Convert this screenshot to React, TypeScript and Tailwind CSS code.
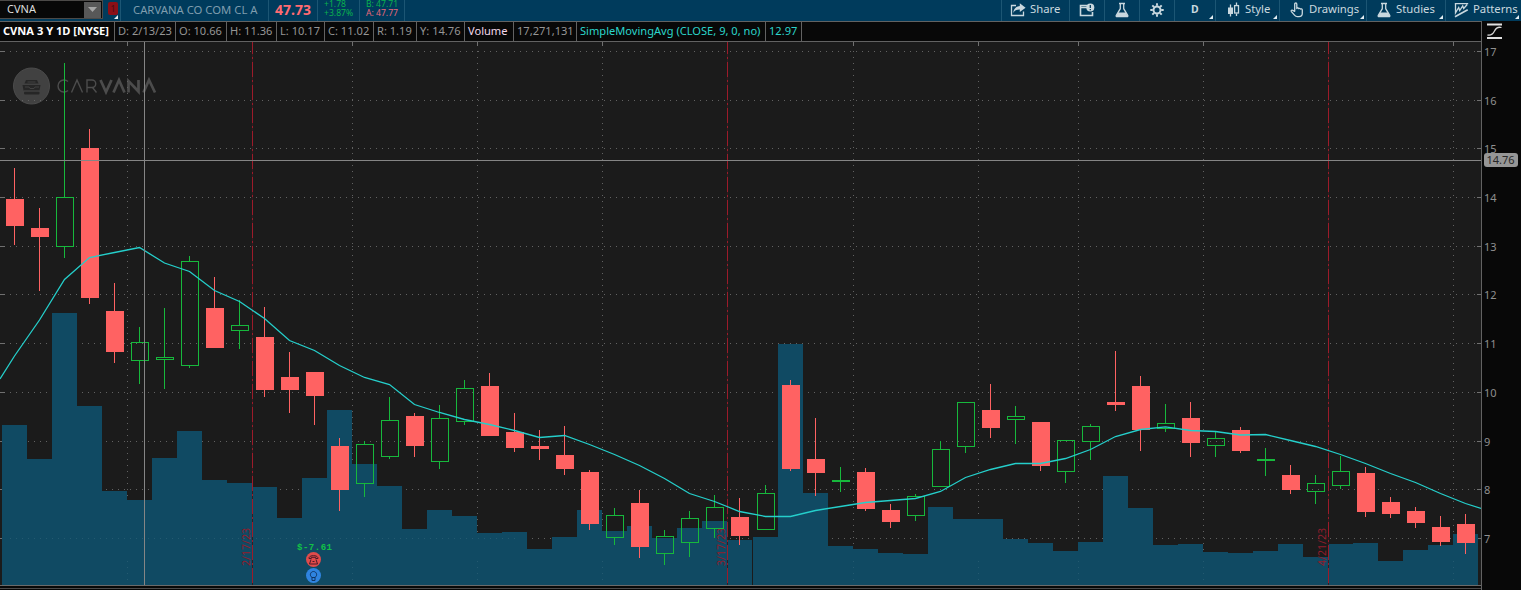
import type { ReactNode } from "react";
import clsx from "clsx";

type Candle = {
  up: boolean;
  high: number;
  top: number;
  bottom: number;
  low: number;
  volume: number;
};

const BASELINE = 585;
const PLOT_TOP = 42;
const PLOT_RIGHT = 1481;

// [direction, high, body top, body bottom, low, volume top]
const rows: [string, number, number, number, number, number][] = [
  ["r", 168, 199, 226, 245, 425],
  ["r", 208, 228, 237, 291, 459],
  ["g", 63, 197, 247, 258, 313],
  ["r", 129, 148, 298, 304, 406],
  ["r", 283, 311, 352, 363, 491],
  ["g", 327, 342, 361, 384, 500],
  ["g", 308, 357, 360, 389, 458],
  ["g", 256, 261, 366, 368, 431],
  ["r", 277, 308, 348, 348, 480],
  ["g", 300, 325, 331, 349, 483],
  ["r", 307, 337, 390, 397, 487],
  ["r", 352, 377, 390, 413, 518],
  ["r", 372, 372, 396, 425, 478],
  ["r", 438, 446, 490, 511, 410],
  ["g", 441, 444, 484, 497, 464],
  ["g", 397, 420, 457, 459, 486],
  ["r", 413, 416, 446, 457, 529],
  ["g", 405, 418, 462, 469, 510],
  ["g", 380, 388, 422, 425, 516],
  ["r", 373, 386, 436, 436, 533],
  ["r", 413, 432, 448, 452, 532],
  ["r", 430, 446, 449, 460, 549],
  ["r", 426, 455, 469, 475, 537],
  ["r", 470, 472, 524, 530, 510],
  ["g", 508, 515, 538, 545, 531],
  ["r", 490, 503, 547, 558, 526],
  ["g", 530, 536, 554, 565, 538],
  ["g", 511, 518, 543, 557, 528],
  ["g", 495, 507, 529, 538, 521],
  ["r", 498, 517, 536, 545, 540],
  ["g", 485, 493, 530, 530, 537],
  ["r", 380, 385, 469, 471, 344],
  ["r", 418, 459, 473, 496, 493],
  ["g", 467, 480, 482, 492, 546],
  ["r", 468, 472, 509, 511, 549],
  ["r", 504, 510, 522, 528, 553],
  ["g", 494, 496, 516, 521, 554],
  ["g", 441, 449, 487, 487, 507],
  ["g", 402, 402, 447, 453, 519],
  ["r", 384, 410, 428, 438, 519],
  ["g", 406, 416, 420, 444, 539],
  ["r", 422, 422, 466, 471, 543],
  ["g", 440, 440, 472, 483, 551],
  ["g", 424, 426, 442, 460, 542],
  ["r", 351, 402, 405, 411, 476],
  ["r", 376, 386, 430, 451, 508],
  ["g", 404, 423, 429, 432, 545],
  ["r", 402, 418, 443, 457, 544],
  ["g", 431, 438, 446, 457, 552],
  ["r", 427, 430, 451, 453, 553],
  ["g", 448, 459, 461, 476, 551],
  ["r", 465, 475, 490, 494, 544],
  ["g", 475, 483, 492, 504, 557],
  ["g", 456, 471, 486, 489, 544],
  ["r", 467, 473, 512, 517, 543],
  ["r", 497, 502, 514, 518, 561],
  ["r", 507, 511, 523, 528, 550],
  ["r", 516, 527, 542, 546, 545],
  ["r", 514, 524, 543, 554, 534],
];

const candles: Candle[] = rows.map(([dir, high, top, bottom, low, volume]) => ({
  up: dir === "g",
  high,
  top,
  bottom,
  low,
  volume,
}));

const average = [
  356, 320, 279.5, 257.5, 252.5, 247.5, 263, 271.5, 290.5, 301.5, 318.5, 340.5,
  350.5, 365.5, 377.5, 384.5, 404.5, 412.5, 419.5, 424.5, 430.5, 437.5, 435.5,
  444.5, 454.5, 465.5, 478.5, 493.5, 501.5, 511.5, 516.5, 516.5, 510.5, 506.5,
  502.5, 500.5, 498.5, 491.5, 477.5, 469.5, 463.5, 463.5, 458.5, 449.5, 436.5,
  429.5, 426.8, 430.5, 431.5, 435, 434.5, 440.5, 446.5, 454.5, 463.5, 473.5,
  482.5, 493.5, 503.5,
];

// a one pixel seam separates the two halves of the series
const barX = (i: number) => 2 + i * 25 + (i >= 30 ? 1 : 0);

const priceLevels = [
  { label: "17", y: 51 },
  { label: "16", y: 100 },
  { label: "15", y: 148 },
  { label: "14", y: 197 },
  { label: "13", y: 246 },
  { label: "12", y: 294 },
  { label: "11", y: 343 },
  { label: "10", y: 392 },
  { label: "9", y: 441 },
  { label: "8", y: 489 },
  { label: "7", y: 538 },
];

const gridColumns = [127, 252, 352, 477, 602, 727, 853, 978, 1078, 1203, 1328, 1453];

const expirations = [
  { label: "2/17/23", x: 252 },
  { label: "3/17/23", x: 727 },
  { label: "4/21/23", x: 1328 },
];

const averagePath =
  "M0 379 " +
  average.map((y, i) => `L${barX(i) + 12.5} ${y}`).join(" ") +
  " L1481 508.5";

function Icon({
  children,
  className,
  width = 16,
}: {
  children: ReactNode;
  className?: string;
  width?: number;
}) {
  return (
    <svg
      viewBox={`0 0 ${width} 16`}
      width={width}
      height={16}
      fill="none"
      stroke="currentColor"
      strokeWidth={1.3}
      className={clsx("shrink-0", className)}
    >
      {children}
    </svg>
  );
}

function FlaskIcon() {
  return (
    <Icon width={14}>
      <path d="M4 1.5h6M5.3 1.5v5.2L1.3 13.3c-.4.8 0 1.4.8 1.4h9.8c.8 0 1.2-.6.8-1.4L8.7 6.7V1.5" />
      <path d="M3.2 10.5h7.6l2 3.5-.6.7H1.8l-.6-.7z" fill="currentColor" stroke="none" />
    </Icon>
  );
}

function ShareIcon() {
  return (
    <Icon>
      <path d="M6 3.5H1.5v10h12V9.5" />
      <path
        d="M9.8 1.3L15.6 5.7 9.8 10V7.5C6.7 7.4 4.8 8.5 3.2 11 3.6 6.8 6 4.3 9.8 3.9z"
        fill="currentColor"
        stroke="none"
      />
    </Icon>
  );
}

function ReportIcon() {
  return (
    <Icon>
      <path d="M8 3.5H1.5v10h12V10M1 5.5h7" strokeWidth={1.6} />
      <circle cx="11.3" cy="5.5" r="4" fill="currentColor" stroke="none" />
      <path d="M11.3 3v3M11.3 7v1.2" stroke="#003b5c" />
    </Icon>
  );
}

function GearIcon() {
  return (
    <Icon>
      <circle cx="8" cy="8" r="3.5" strokeWidth={2} />
      <path
        d="M8 1.3v2.5M8 12.2v2.5M1.3 8h2.5M12.2 8h2.5M3.3 3.3l1.7 1.7M11 11l1.7 1.7M12.7 3.3L11 5M5 11l-1.7 1.7"
        strokeWidth={1.9}
      />
    </Icon>
  );
}

function StyleIcon() {
  return (
    <Icon width={13}>
      <path d="M3.5 2.5v12M9.5.5v3M9.5 11.5v2.5" />
      <rect x="1" y="5.5" width="5" height="6.5" fill="currentColor" stroke="none" />
      <rect x="7.6" y="3.6" width="3.9" height="7.4" />
    </Icon>
  );
}

function HandIcon() {
  return (
    <Icon width={14}>
      <path
        d="M4.7 9.3V2.2c0-1.6 2.1-1.6 2.1 0v4.3c.3-.8 1.6-.8 1.9.2.4-.6 1.5-.5 1.8.4.6-.5 1.8-.2 1.8 1v3.2c0 2-1 3.4-3.3 3.4H7.3c-1.3 0-2-.5-2.8-1.5L1.4 9.6c-.7-1 .4-1.900 1.400-1.200z"
        strokeLinejoin="round"
      />
    </Icon>
  );
}

function PatternsIcon() {
  return (
    <Icon width={15}>
      <path d="M.8 1.7h13.4M1.5 2v8.8L4.7 5.500l1 3 3-4.500 1 2.500L13.200 2.500" />
      <path d="M1 14.700L13.700 7.700" strokeWidth={1.700} />
    </Icon>
  );
}

function Corner() {
  return (
    <span className="absolute right-[2px] bottom-[2px] h-1 w-1 bg-[#e3edf2] [clip-path:polygon(100%_0,100%_100%,0_100%)]" />
  );
}

function ToolButton({
  children,
  className,
  corner,
}: {
  children: ReactNode;
  className: string;
  corner?: boolean;
}) {
  return (
    <div
      className={clsx(
        "relative flex h-full shrink-0 items-center border-l border-[#1c5674] pb-[2px] whitespace-nowrap text-[#c9d8df]",
        className
      )}
    >
      {children}
      {corner && <Corner />}
    </div>
  );
}

function Toolbar() {
  return (
    <div className="flex h-[21px] w-full shrink-0 bg-[#003b5c] text-[11.3px]">
      <div className="flex h-[19px] w-[103px] shrink-0 items-center justify-between border border-[#4c4a48] border-l-0 bg-[#080808] pr-px pl-[7px] text-[11px] text-[#dedede]">
        <span>CVNA</span>
        <span className="flex h-[16px] w-[17px] items-center justify-center bg-[#585858]">
          <svg width="9" height="5" viewBox="0 0 9 5">
            <path d="M0 0h9L4.5 5z" fill="#a5a5a5" />
          </svg>
        </span>
      </div>
      <div className="relative w-[17px] shrink-0">
        <div className="mt-[2px] ml-[5px] flex h-[13px] w-[10px] items-center justify-center rounded-[2px] bg-[#8c0f17] text-[9px] text-[#4a0a12]">
          1
        </div>
        <Corner />
      </div>
      <div className="w-[148px] shrink-0 border-l border-[#1c5674] pl-[12px] leading-[19px] whitespace-nowrap text-[#7f9dae]">
        CARVANA CO COM CL A
      </div>
      <div className="w-[49px] shrink-0 border-l border-[#1c5674] pl-[6px] text-[14px] leading-[20px] font-bold text-[#ff6b72]">
        47.73
      </div>
      <div className="w-[42px] shrink-0 border-l border-[#1c5674] pl-[6px] text-[8.6px] leading-[9px] whitespace-nowrap text-[#0bb04e]">
        <div>+1.78</div>
        <div>+3.87%</div>
      </div>
      <div className="w-[45px] shrink-0 border-l border-[#1c5674] pl-[6px] text-[8.6px] leading-[9px] whitespace-nowrap">
        <div className="text-[#0bb04e]">B: 47.71</div>
        <div className="text-[#e8697b]">A: 47.77</div>
      </div>
      <div className="flex-1 border-l border-[#1c5674]" />
      <ToolButton className="w-[68px] gap-[4px] pl-[8px]">
        <ShareIcon />
        Share
      </ToolButton>
      <ToolButton className="w-[35px] pl-[9px]">
        <ReportIcon />
      </ToolButton>
      <ToolButton className="w-[35px] pl-[10px]">
        <FlaskIcon />
      </ToolButton>
      <ToolButton className="w-[35px] pl-[9px]">
        <GearIcon />
      </ToolButton>
      <ToolButton className="w-[41px] pl-[16px] text-[10.5px] font-bold" corner>
        D
      </ToolButton>
      <ToolButton className="w-[64px] gap-[5px] pl-[11px]" corner>
        <StyleIcon />
        Style
      </ToolButton>
      <ToolButton className="w-[87px] gap-[5px] pl-[10px]" corner>
        <HandIcon />
        Drawings
      </ToolButton>
      <ToolButton className="w-[79px] gap-[5px] pl-[10px]" corner>
        <FlaskIcon />
        Studies
      </ToolButton>
      <ToolButton className="w-[76px] gap-[4px] pl-[8px]" corner>
        <PatternsIcon />
        Patterns
      </ToolButton>
    </div>
  );
}

const cells = [
  { text: "CVNA 3 Y 1D [NYSE]", className: "w-[115px] pl-[3px] font-bold text-white" },
  { text: "D: 2/13/23", className: "w-[61px] pl-[3px]" },
  { text: "O: 10.66", className: "w-[51px] pl-[3px]" },
  { text: "H: 11.36", className: "w-[50px] pl-[3px]" },
  { text: "L: 10.17", className: "w-[48px] pl-[3px]" },
  { text: "C: 11.02", className: "w-[49px] pl-[3px]" },
  { text: "R: 1.19", className: "w-[43px] pl-[3px]" },
  { text: "Y: 14.76", className: "w-[48px] pl-[3px]" },
  { text: "Volume", className: "w-[49px] pl-[3px] text-[#f3d9ea]" },
  { text: "17,271,131", className: "w-[63px] pl-[3px]" },
  { text: "SimpleMovingAvg (CLOSE, 9, 0, no)", className: "w-[189px] pl-[3px] text-[#2bd5cb]" },
  { text: "12.97", className: "w-[36px] pl-[3px] text-[#2bd5cb]" },
];

function StatusRow() {
  return (
    <div className="flex h-[21px] shrink-0 border-y border-[#626262] bg-[#080808] text-[11.1px] leading-[18px] text-[#959595]">
      {cells.map((cell) => (
        <div
          key={cell.text}
          className={clsx("shrink-0 border-r border-[#626262] whitespace-nowrap", cell.className)}
        >
          {cell.text}
        </div>
      ))}
    </div>
  );
}

function Watermark() {
  return (
    <g>
      <circle cx="31.5" cy="86" r="18" fill="#414141" stroke="#4b4b4b" />
      <g fill="#262626">
        <path d="M26 80h11l1.500 3.500h-14z" />
        <path d="M22.500 85h18l-1 5.500h-16z" />
        <rect x="24" y="91.500" width="15.500" height="3" rx="1" />
      </g>
      <path d="M27.500 82h8M25 87h4l1 1.500h4l1-1.500h4M24 91h16" fill="none" stroke="#414141" />
      <g fill="none" stroke="#4c4c4c" strokeWidth="1.4">
        <path d="M68 81.500a6 6 0 1 0 0 9M71.500 92.500l5.500-12.500 5.500 12.500M87 92.500V80h5a3.700 3.700 0 0 1 0 7.500h-5M92.500 87.500l4 5" />
        <path
          d="M100.500 80l5.500 12 5.500-12M113.500 92.500L119 80l5.500 12.500M128.500 92.500V81l10 10.500V80M143.500 92.500L149 80l6 12.500"
          strokeWidth="2.700"
        />
      </g>
    </g>
  );
}

function Chart() {
  return (
    <svg
      width={PLOT_RIGHT}
      height={543}
      viewBox={`0 ${PLOT_TOP} ${PLOT_RIGHT} 543`}
      className="block shrink-0 bg-[#1b1b1b]"
      shapeRendering="crispEdges"
    >
      <g shapeRendering="auto">
        <Watermark />
      </g>

      <g stroke="#626262" fill="none">
        {priceLevels.map((level) => (
          <path
            key={level.label}
            d={`M10 ${level.y + 0.5}H1476`}
            strokeDasharray="1 5"
          />
        ))}
        {gridColumns.map((x) => (
          <path key={x} d={`M${x + 0.5} 45V${BASELINE}`} strokeDasharray="1 5" />
        ))}
      </g>
      <g stroke="#707070">
        {priceLevels.map((level) => (
          <path key={level.label} d={`M0 ${level.y + 0.5}h5M1477 ${level.y + 0.5}h4`} />
        ))}
        {gridColumns.map((x) => (
          <path key={x} d={`M${x + 0.5} 42v4`} />
        ))}
      </g>

      <g fill="#104a63">
        {candles.map((candle, i) => (
          <rect
            key={i}
            x={barX(i)}
            y={candle.volume}
            width={25}
            height={BASELINE - candle.volume}
          />
        ))}
      </g>
      <g stroke="#245a71">
        {gridColumns.map((x) => (
          <path key={x} d={`M${x + 0.5} 561V${BASELINE}`} strokeDasharray="1 5" />
        ))}
        <path d="M10 538.5H520" strokeDasharray="1 5" />
      </g>

      {expirations.map(({ label, x }) => (
        <g key={label}>
          <rect x={x} y={PLOT_TOP} width={1} height={BASELINE - PLOT_TOP} fill="#3a1a1e" />
          <path
            d={`M${x + 0.5} 39V${BASELINE}`}
            stroke="#9c1b2a"
            strokeDasharray="15 3 2 3"
          />
          <text
            transform={`translate(${x - 2} 566) rotate(-90)`}
            fontSize="10.5"
            fill="#8f1d2d"
            textLength="38"
            lengthAdjust="spacingAndGlyphs"
          >
            {label}
          </text>
        </g>
      ))}

      {candles.map((candle, i) => {
        const x = barX(i);
        const height = candle.bottom - candle.top;
        if (!candle.up) {
          return (
            <g key={i} fill="#ff6262">
              <rect x={x + 12} y={candle.high} width={1} height={candle.low - candle.high} />
              <rect x={x + 4} y={candle.top} width={18} height={height} />
            </g>
          );
        }
        return (
          <g key={i} fill="#17b83c">
            <rect x={x + 12} y={candle.high} width={1} height={candle.top - candle.high} />
            <rect x={x + 12} y={candle.bottom} width={1} height={candle.low - candle.bottom} />
            <rect
              x={x + 4.5}
              y={candle.top + 0.5}
              width={17}
              height={height - 1}
              fill="none"
              stroke="#17b83c"
            />
          </g>
        );
      })}

      <path
        d={averagePath}
        fill="none"
        stroke="#25cfcb"
        strokeWidth="1.3"
        shapeRendering="auto"
      />

      <path d="M0 160.5H1481M144.5 42V585" stroke="#858585" fill="none" />

      <g shapeRendering="auto">
        <text
          x="297"
          y="550"
          fontSize="9"
          fill="#12c246"
          textLength="35"
          className="font-['Liberation_Mono',monospace] font-bold"
        >
          $-7.61
        </text>
        <circle cx="313.5" cy="559.5" r="7.5" fill="#e04b4b" />
        <path
          d="M309 558.500c-.5-3.800 9.500-3.800 9 0h-2.300v-1.200h-4.400v1.200zM311 559.500l-1.500 4.500h8l-1.500-4.500M312.500 561.500h2"
          fill="none"
          stroke="#4a1a28"
        />
        <circle cx="313.5" cy="575.5" r="7.5" fill="#2f84e0" />
        <path
          d="M312 577.500c-3-2-1.500-6 1.500-6s4.500 4 1.500 6zM312 577.500v3h3v-3"
          fill="none"
          stroke="#0e3564"
        />
      </g>
    </svg>
  );
}

function PriceAxis() {
  return (
    <svg width={39} height={569} viewBox="1482 21 39 569" className="block shrink-0">
      <path d="M1487 24.500h15M1487 38h15" stroke="#e2e2e2" strokeWidth="2" />
      <path
        d="M1487.500 35c3.500.8 5.500-1 7-4s3.500-4.500 7-3.500"
        fill="none"
        stroke="#d5d5d5"
        strokeWidth="1.3"
      />
      {priceLevels.map((level) => (
        <text key={level.label} x="1484" y={level.y + 5} fontSize="11" fill="#8f8f8f">
          {level.label}
        </text>
      ))}
      <rect x="1484" y="153" width="34" height="14" rx="3" fill="#969696" />
      <text x="1486.5" y="164" fontSize="11" fill="#282828" textLength="28">
        14.76
      </text>
    </svg>
  );
}

export default function App() {
  return (
    <div className="flex h-[590px] w-[1521px] flex-col overflow-hidden bg-[#080808] font-['Noto_Sans',sans-serif]">
      <Toolbar />
      <div className="flex flex-1">
        <div className="flex w-[1482px] shrink-0 flex-col border-r border-[#626262]">
          <StatusRow />
          <Chart />
          <div className="h-[5px] border-t border-[#6a6a6a]">
            <div className="mt-[2px] h-px bg-[#4a4a4a]" />
          </div>
        </div>
        <PriceAxis />
      </div>
    </div>
  );
}
